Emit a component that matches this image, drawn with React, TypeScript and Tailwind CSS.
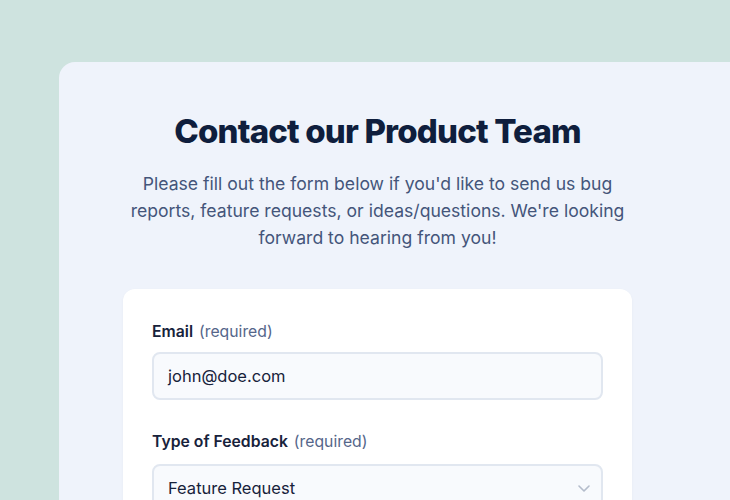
export default function App() {
  return (
    <div className="min-h-[500px] w-[730px] overflow-hidden bg-[#cee3df] pl-[59px] pt-[62px] font-['Inter',sans-serif]">
      <div className="w-[720px] rounded-tl-2xl bg-[#eff3fb] pb-10">
        <div className="w-[637px] px-16 pt-[49px]">

          {/* Header */}
          <h1 className="text-center text-[33px] font-extrabold leading-10 tracking-[-0.025em] text-[#0f1e3d]">
            Contact our Product Team
          </h1>
          <p className="mx-auto mt-[19px] max-w-[510px] text-center text-[17.6px] leading-[27px] text-[#44557a]">
            Please fill out the form below if you'd like to send us bug reports, feature requests, or ideas/questions. We're looking forward to hearing from you!
          </p>

          {/* Form card */}
          <div className="mt-[38px] rounded-xl bg-white px-[29px] pt-[31px] pb-8 shadow-[0_1px_3px_rgba(15,30,61,0.04)]">
            <div>
              <label className="flex items-baseline gap-[6px] text-[15.75px] leading-6">
                <span className="font-semibold text-[#17223b]">Email</span>
                <span className="text-[#55668a]">(required)</span>
              </label>
              <div className="mt-[8px] flex h-12 items-center rounded-lg border-2 border-[#e1e7f0] bg-[#f8fafd] px-[14px] text-[16.5px] text-[#17223b]">
                john@doe.com
              </div>
            </div>

            <div className="mt-[30px]">
              <label className="flex items-baseline gap-[6px] text-[15.75px] leading-6">
                <span className="font-semibold text-[#17223b]">Type of Feedback</span>
                <span className="text-[#55668a]">(required)</span>
              </label>
              <div className="mt-[10px] flex h-12 items-center justify-between rounded-lg border-2 border-[#e1e7f0] bg-[#f8fafd] pl-[14px] pr-[11px] text-[16.5px] text-[#17223b]">
                <span>Feature Request</span>
                <svg width="12" height="7" viewBox="0 0 12 7" fill="none" className="text-[#b4bccb]">
                  <path d="M1 1l5 5 5-5" stroke="currentColor" strokeWidth="1.6" strokeLinecap="round" strokeLinejoin="round" />
                </svg>
              </div>
            </div>
          </div>

        </div>
      </div>
    </div>
  );
}
